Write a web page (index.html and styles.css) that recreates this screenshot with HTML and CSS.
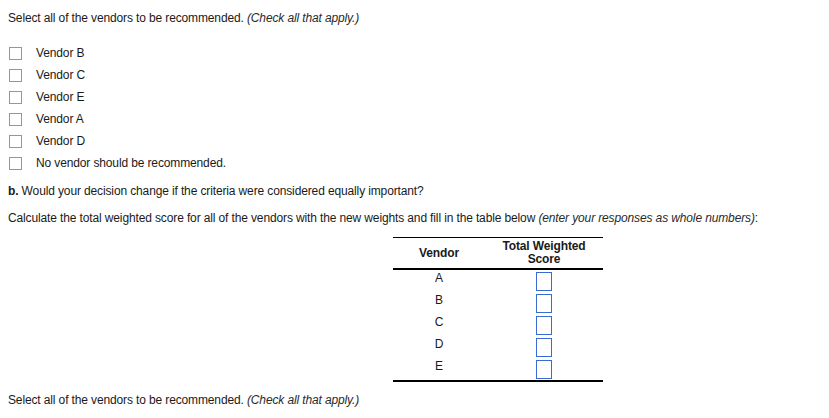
FILE: index.html
```html
<!DOCTYPE html>
<html>
<head>
<meta charset="utf-8">
<link rel="stylesheet" href="styles.css">
</head>
<body>
<div class="page">
  <p class="line q">Select all of the vendors to be recommended. <em>(Check all that apply.)</em></p>
  <ul class="options">
    <li class="opt"><span class="cb"></span><span class="lbl">Vendor B</span></li>
    <li class="opt"><span class="cb"></span><span class="lbl">Vendor C</span></li>
    <li class="opt"><span class="cb"></span><span class="lbl">Vendor E</span></li>
    <li class="opt"><span class="cb"></span><span class="lbl">Vendor A</span></li>
    <li class="opt"><span class="cb"></span><span class="lbl">Vendor D</span></li>
    <li class="opt"><span class="cb"></span><span class="lbl">No vendor should be recommended.</span></li>
  </ul>
  <p class="line b-line"><strong>b.</strong> Would your decision change if the criteria were considered equally important?</p>
  <p class="line calc">Calculate the total weighted score for all of the vendors with the new weights and fill in the table below <em>(enter your responses as whole numbers)</em>:</p>
  <table class="scores">
    <thead>
      <tr><th class="c-vendor">Vendor</th><th class="c-score">Total Weighted<br>Score</th></tr>
    </thead>
    <tbody>
      <tr><td class="c-vendor">A</td><td class="c-score"><span class="inp"></span></td></tr>
      <tr><td class="c-vendor">B</td><td class="c-score"><span class="inp"></span></td></tr>
      <tr><td class="c-vendor">C</td><td class="c-score"><span class="inp"></span></td></tr>
      <tr><td class="c-vendor">D</td><td class="c-score"><span class="inp"></span></td></tr>
      <tr><td class="c-vendor">E</td><td class="c-score"><span class="inp"></span></td></tr>
    </tbody>
  </table>
  <p class="line q2">Select all of the vendors to be recommended. <em>(Check all that apply.)</em></p>
</div>
</body>
</html>
```
FILE: styles.css
```css
html, body {
  margin: 0;
  padding: 0;
  background: #fff;
}
body {
  font-family: "Liberation Sans", Arial, sans-serif;
  font-size: 12px;
  letter-spacing: -0.13px;
  color: #1a1a1a;
}
.page {
  padding: 10px 8px 0 8px;
}
.line {
  margin: 0;
  line-height: 16px;
}
em {
  font-style: italic;
  color: #2a2a2a;
}
.options {
  list-style: none;
  margin: 15px 0 0 0;
  padding: 0;
}
.opt {
  display: flex;
  align-items: center;
  height: 22px;
}
.cb {
  box-sizing: border-box;
  width: 13px;
  height: 13px;
  border: 1.5px solid #8193e0;
  margin-left: 1px;
  margin-top: 2px;
  background: #fff;
}
.lbl {
  margin-left: 14px;
  line-height: 16px;
  margin-top: 1px;
}
.b-line {
  margin-top: 10px;
}
.calc {
  margin-top: 11px;
}
.scores {
  margin: 11px 0 0 385px;
  border-collapse: collapse;
  border-top: 1px solid #000;
  border-bottom: 2px solid #000;
}
.scores th {
  font-weight: bold;
  line-height: 13px;
  height: 30px;
  padding: 0;
  text-align: center;
  vertical-align: middle;
  border-bottom: 2px solid #000;
}
.c-vendor {
  width: 92px;
}
.c-score {
  width: 118px;
}
.scores td {
  height: 22px;
  padding: 0;
  text-align: center;
  vertical-align: top;
  line-height: 14px;
}
.scores td.c-vendor {
  padding-top: 1px;
  height: 21px;
}
.inp {
  display: block;
  box-sizing: border-box;
  width: 16px;
  height: 19px;
  margin: 2px auto 0 auto;
  border: 1.5px solid #3a6bd4;
  background: #fff;
}
.q2 {
  margin-top: 10px;
}
```
